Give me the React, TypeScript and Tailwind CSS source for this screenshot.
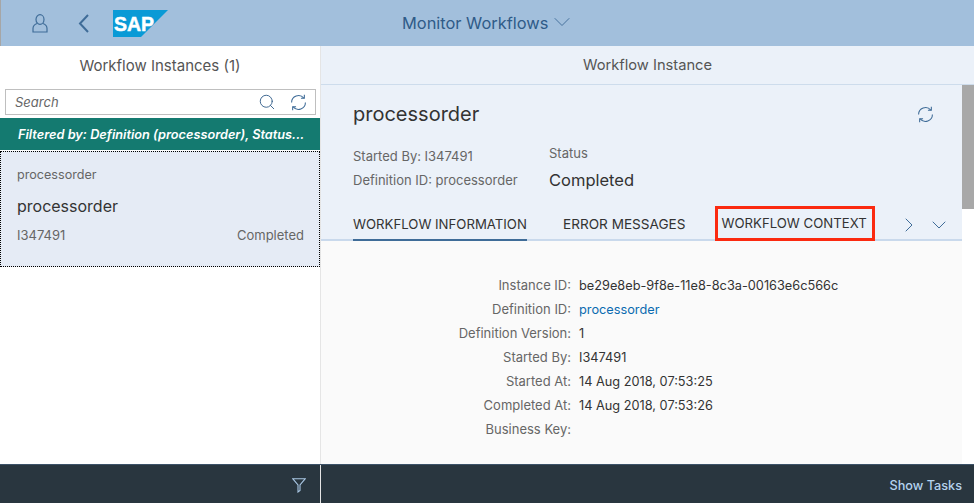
import { ChevronDown, ChevronRight, Search } from "lucide-react";

const details = [
  { label: "Instance ID:", value: "be29e8eb-9f8e-11e8-8c3a-00163e6c566c" },
  { label: "Definition ID:", value: "processorder", link: true },
  { label: "Definition Version:", value: "1" },
  { label: "Started By:", value: "I347491" },
  { label: "Started At:", value: "14 Aug 2018, 07:53:25" },
  { label: "Completed At:", value: "14 Aug 2018, 07:53:26" },
  { label: "Business Key:", value: "" },
];

function SapLogo() {
  return (
    <svg width="55" height="27" viewBox="0 0 55 27">
      <path d="M0 0H55L28 27H0Z" fill="#0a9ad6" />
      <text
        x="1"
        y="20.5"
        fontFamily="Liberation Sans"
        fontWeight="700"
        fontSize="20"
        fill="#fff"
        stroke="#fff"
        strokeWidth="0.5"
        textLength="40"
        lengthAdjust="spacingAndGlyphs"
      >
        SAP
      </text>
    </svg>
  );
}

function UserIcon() {
  return (
    <svg width="16" height="19" viewBox="0 0 16 19" fill="none" stroke="#3f6c98" strokeWidth="1.2">
      <ellipse cx="8" cy="5.5" rx="4" ry="4.8" />
      <path d="M5 9.5C2.5 10.5 1 12 1 14.5V18H15V14.5C15 12 13.5 10.5 11 9.5" />
    </svg>
  );
}

function BackIcon() {
  return (
    <svg width="11" height="19" viewBox="0 0 11 19" fill="none" stroke="#3f6c98" strokeWidth="2">
      <path d="M10 1L2 9.5L10 18" />
    </svg>
  );
}

function SyncIcon() {
  return (
    <svg width="17" height="17" viewBox="0 0 16 16" fill="none" stroke="#3f6c98" strokeWidth="1">
      <path d="M1.5 8A6.5 6.5 0 0 1 13 3.8" />
      <path d="M13.5 0.8V4H10.3" />
      <path d="M14.5 8A6.5 6.5 0 0 1 3 12.2" />
      <path d="M2.5 15.2V12H5.7" />
    </svg>
  );
}

function FilterIcon() {
  return (
    <svg width="14" height="15" viewBox="0 0 14 15" fill="none" stroke="#a9c7e4" strokeWidth="1.1">
      <path d="M0.7 0.7H13.3L8 7V12.5L6 14V7Z" />
    </svg>
  );
}

export default function App() {
  return (
    <div className="flex h-[503px] w-[974px] flex-col overflow-hidden bg-white font-['Inter',sans-serif] text-[#333]">
      <header className="flex h-[46px] shrink-0 items-center border-l border-[#a6a6a6] bg-[#a2bfdc]">
        <div className="flex w-[319px] items-center pl-[31px]">
          <UserIcon />
          <div className="ml-[30px] flex">
            <BackIcon />
          </div>
          <div className="ml-[24px] flex">
            <SapLogo />
          </div>
        </div>
        <div className="flex items-center pl-[82px] text-[16.4px] text-[#2f5b88]">
          Monitor Workflows
          <ChevronDown className="-mt-[2px] text-[#3f6c98]" size={28} strokeWidth={0.8} />
        </div>
      </header>

      <div className="flex min-h-0 flex-1">
        <aside className="flex w-[321px] shrink-0 flex-col border-r border-[#e5e5e5]">
          <div className="flex h-[39px] items-center justify-center pt-[1px] text-[15px] text-[#555]">
            Workflow Instances (1)
          </div>
          <div className="mx-[5px] mt-[4px] flex h-[26px] w-[311px] items-center border border-[#bfbfbf] pr-[8px] pl-[9px]">
            <span className="flex-1 pt-[1px] text-[13px] italic text-[#666]">Search</span>
            <Search className="mr-[-1px] text-[#2f5b88]" size={18} strokeWidth={1.2} />
            <div className="ml-[15px] flex">
              <SyncIcon />
            </div>
          </div>
          <div className="mt-[3px] flex h-[32px] items-center bg-[#147a70] pt-[1px] pl-[18px] text-[12.75px] font-semibold italic text-white">
            Filtered by: Definition (processorder), Status...
          </div>
          <div className="mt-px h-[116px] border border-dotted border-black bg-[#e5ebf5] pt-[14px] pr-[15px] pl-[16px]">
            <div className="text-[12.6px] text-[#666]">processorder</div>
            <div className="mt-[9px] text-[16px] text-[#333]">processorder</div>
            <div className="mt-[8px] flex justify-between text-[13px] text-[#666]">
              <span>I347491</span>
              <span>Completed</span>
            </div>
          </div>
        </aside>

        <main className="flex min-w-0 flex-1 flex-col">
          <div className="flex h-[39px] shrink-0 items-center justify-center border-b border-[#cddcec] bg-[#ebf1f9] pt-[1px] text-[14.7px] text-[#555]">
            Workflow Instance
          </div>
          <div className="flex min-h-0 flex-1">
            <div className="flex min-w-0 flex-1 flex-col">
              <div className="h-[156px] shrink-0 border-b-2 border-[#c9d9ec] bg-[#ebf1f9] pl-[32px]">
                <div className="flex items-center justify-between pt-[14px] pr-[28px]">
                  <div className="text-[20px] leading-[30px] text-[#333]">processorder</div>
                  <SyncIcon />
                </div>
                <div className="mt-[14px] flex text-[13px] leading-[20px] text-[#666]">
                  <div className="w-[196px] pt-[3px]">
                    <div>Started By: I347491</div>
                    <div className="mt-[4px]">Definition ID: processorder</div>
                  </div>
                  <div>
                    <div>Status</div>
                    <div className="mt-[5px] text-[16.5px] leading-[24px] text-[#333]">Completed</div>
                  </div>
                </div>
                <div className="mt-[14px] flex h-[35px] items-stretch text-[13.2px] whitespace-nowrap text-[#333]">
                  <div className="flex w-[174px] items-center border-b-2 border-[#3f6c98] pt-[4px]">WORKFLOW INFORMATION</div>
                  <div className="ml-[36px] flex items-center pt-[1px] text-[13.6px]">ERROR MESSAGES</div>
                  <div className="ml-[30px] flex w-[160px] items-center border-[3px] border-[#fb2a10] pt-[1px] pl-[3px]">
                    WORKFLOW CONTEXT
                  </div>
                  <ChevronRight className="ml-[22px] mt-[3px] self-center text-[#3f6c98]" size={24} strokeWidth={1} />
                  <ChevronDown className="ml-[6px] mt-[3px] self-center text-[#3f6c98]" size={24} strokeWidth={1} />
                </div>
              </div>
              <div className="flex-1 bg-[#fafafa] pt-[33px]">
                {details.map((row) => (
                  <div key={row.label} className="flex h-[24px] items-center text-[12.75px]">
                    <span className="w-[250px] text-right text-[13px] text-[#666]">{row.label}</span>
                    <span className={row.link ? "ml-[8px] text-[#0a6ab0]" : "ml-[8px] text-[#333]"}>{row.value}</span>
                  </div>
                ))}
              </div>
            </div>
            <div className="w-[12px] shrink-0 bg-white">
              <div className="h-[124px] w-[12px] bg-[#a8a8a8]" />
            </div>
          </div>
        </main>
      </div>

      <footer className="flex h-[39px] shrink-0 border-t border-[#3c5268] bg-[#29363f]">
        <div className="flex w-[321px] items-center justify-end border-r border-[#e5e5e5] pt-[2px] pr-[14px]">
          <FilterIcon />
        </div>
        <div className="flex flex-1 items-center justify-end pt-[3px] pr-[12px] text-[12.7px] font-medium text-[#b5d3ee]">
          Show Tasks
        </div>
      </footer>
    </div>
  );
}
